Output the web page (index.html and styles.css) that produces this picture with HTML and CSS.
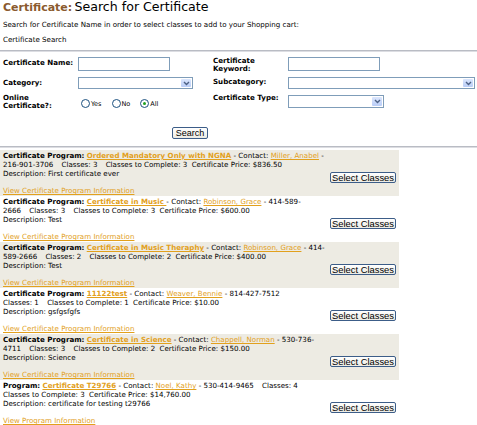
FILE: index.html
```html
<!DOCTYPE html>
<html lang="en">
<head>
  <meta charset="UTF-8">
  <title>Search for Certificate</title>
  <link rel="stylesheet" href="styles.css">
</head>
<body>
  <!-- Page heading -->
  <div class="heading">
    <span class="heading-key">Certificate:</span> <span class="heading-text">Search for Certificate</span>
  </div>
  <div class="intro">Search for Certificate Name in order to select classes to add to your Shopping cart:</div>
  <div class="section-title">Certificate Search</div>
  <div class="rule"></div>

  <!-- Search form -->
  <div class="search-form">
    <div class="frow frow-1">
      <div class="flabel">Certificate Name:</div>
      <div class="fctl"><span class="text-input name-input"></span></div>
      <div class="flabel">Certificate<br>Keyword:</div>
      <div class="fctl"><span class="text-input keyword-input"></span></div>
    </div>
    <div class="frow frow-2">
      <div class="flabel">Category:</div>
      <div class="fctl">
        <span class="select-box category-select"><span class="select-arrow"><svg width="7" height="5" viewBox="0 0 7 5"><path d="M1 1l2.5 2.5L6 1" stroke="#4d6185" stroke-width="1.4" fill="none"/></svg></span></span>
      </div>
      <div class="flabel">Subcategory:</div>
      <div class="fctl">
        <span class="select-box subcategory-select"><span class="select-arrow"><svg width="7" height="5" viewBox="0 0 7 5"><path d="M1 1l2.5 2.5L6 1" stroke="#4d6185" stroke-width="1.4" fill="none"/></svg></span></span>
      </div>
    </div>
    <div class="frow frow-3">
      <div class="flabel">Online<br>Certificate?:</div>
      <div class="fctl radios">
        <span class="radio"></span><span class="radio-text">Yes</span>
        <span class="radio"></span><span class="radio-text">No</span>
        <span class="radio checked"></span><span class="radio-text">All</span>
      </div>
      <div class="flabel">Certificate Type:</div>
      <div class="fctl">
        <span class="select-box type-select"><span class="select-arrow"><svg width="7" height="5" viewBox="0 0 7 5"><path d="M1 1l2.5 2.5L6 1" stroke="#4d6185" stroke-width="1.4" fill="none"/></svg></span></span>
      </div>
    </div>
    <div class="search-row">
      <button class="xp-button search-button">Search</button>
    </div>
  </div>
  <div class="rule rule-bottom"></div>

  <!-- Results -->
  <div class="results">
    <div class="prog alt">
      <div class="prog-lines">
        <b>Certificate Program:</b> <a class="prog-name" href="#">Ordered Mandatory Only with NGNA</a> - Contact: <a href="#">Miller, Anabel</a> -<br>
        216-901-3706<span class="gap"></span> Classes: 3<span class="gap"></span> Classes to Complete: 3<span class="gap-s"></span> Certificate Price: $836.50
      </div>
      <div class="prog-desc">
        <span>Description: First certificate ever</span>
        <button class="xp-button select-button">Select Classes</button>
      </div>
      <a class="prog-info" href="#">View Certificate Program Information</a>
    </div>

    <div class="prog">
      <div class="prog-lines">
        <b>Certificate Program:</b> <a class="prog-name" href="#">Certificate in Music </a> - Contact: <a href="#">Robinson, Grace</a> - 414-589-<br>
        2666<span class="gap"></span> Classes: 3<span class="gap"></span> Classes to Complete: 3<span class="gap-s"></span> Certificate Price: $600.00
      </div>
      <div class="prog-desc">
        <span>Description: Test</span>
        <button class="xp-button select-button">Select Classes</button>
      </div>
      <a class="prog-info" href="#">View Certificate Program Information</a>
    </div>

    <div class="prog alt">
      <div class="prog-lines">
        <b>Certificate Program:</b> <a class="prog-name" href="#">Certificate in Music Theraphy</a> - Contact: <a href="#">Robinson, Grace</a> - 414-<br>
        589-2666<span class="gap"></span> Classes: 2<span class="gap"></span> Classes to Complete: 2<span class="gap-s"></span> Certificate Price: $400.00
      </div>
      <div class="prog-desc">
        <span>Description: Test</span>
        <button class="xp-button select-button">Select Classes</button>
      </div>
      <a class="prog-info" href="#">View Certificate Program Information</a>
    </div>

    <div class="prog">
      <div class="prog-lines">
        <b>Certificate Program:</b> <a class="prog-name" href="#">11122test</a> - Contact: <a href="#">Weaver, Bennie</a> - 814-427-7512<br>
        Classes: 1<span class="gap"></span> Classes to Complete: 1<span class="gap-s"></span> Certificate Price: $10.00
      </div>
      <div class="prog-desc">
        <span>Description: gsfgsfgfs</span>
        <button class="xp-button select-button">Select Classes</button>
      </div>
      <a class="prog-info" href="#">View Certificate Program Information</a>
    </div>

    <div class="prog alt">
      <div class="prog-lines">
        <b>Certificate Program:</b> <a class="prog-name" href="#">Certificate in Science</a> - Contact: <a href="#">Chappell, Norman</a> - 530-736-<br>
        4711<span class="gap"></span> Classes: 3<span class="gap"></span> Classes to Complete: 2<span class="gap-s"></span> Certificate Price: $150.00
      </div>
      <div class="prog-desc">
        <span>Description: Science</span>
        <button class="xp-button select-button">Select Classes</button>
      </div>
      <a class="prog-info" href="#">View Certificate Program Information</a>
    </div>

    <div class="prog">
      <div class="prog-lines">
        <b>Program:</b> <a class="prog-name" href="#">Certificate T29766</a> - Contact: <a href="#">Noel, Kathy</a> - 530-414-9465<span class="gap"></span> Classes: 4<br>
        Classes to Complete: 3<span class="gap-s"></span> Certificate Price: $14,760.00
      </div>
      <div class="prog-desc">
        <span>Description: certificate for testing t29766</span>
        <button class="xp-button select-button">Select Classes</button>
      </div>
      <a class="prog-info" href="#">View Program Information</a>
    </div>
  </div>
</body>
</html>
```

FILE: styles.css
```css
/* base */
body {
  margin: 0;
  background: #fff;
  color: #000;
  font-family: "DejaVu Sans", Verdana, sans-serif;
  font-size: 7.1px;
}
a {
  color: #e2a01c;
  text-decoration: underline;
}

/* heading block */
.heading {
  padding-left: 3px;
  height: 14px;
  line-height: 14px;
  white-space: nowrap;
}
.heading-key {
  color: #8a5a2e;
  font-weight: bold;
  font-size: 11px;
}
.heading-text {
  font-size: 12.6px;
}
.intro {
  padding-left: 3px;
  margin-top: 6px;
  line-height: 10px;
}
.section-title {
  padding-left: 3px;
  margin-top: 5px;
  line-height: 10px;
}
.rule {
  margin-top: 5px;
  height: 1px;
  background: #b9bcc4;
  border-bottom: 1px solid #dcdde2;
}
.rule-bottom {
  margin-top: 7px;
}

/* search form */
.search-form {
  margin-top: 4px;
  padding-left: 3px;
}
.frow {
  display: grid;
  grid-template-columns: 75px 135px 75px 187px;
  align-items: start;
}
.frow-1 { height: 20px; }
.frow-2 { height: 17px; }
.frow-3 { height: 17px; }
.flabel {
  font-weight: bold;
  line-height: 8.5px;
}
.frow-1 .flabel:first-child { margin-top: 1.5px; line-height: 9px; }
.frow-1 .flabel:nth-child(3) { margin-top: 0.5px; }
.frow-2 .flabel:first-child { margin-top: 2.5px; }
.frow-2 .flabel:nth-child(3) { margin-top: 1.5px; }
.frow-3 .flabel { margin-top: 1px; line-height: 8px; }
.frow-3 .flabel:nth-child(3) { line-height: 8.5px; }

.text-input {
  display: block;
  margin-top: 1px;
  height: 12px;
  border: 1px solid #7f9db9;
  background: #fff;
}
.name-input { width: 90px; }
.keyword-input { width: 90px; }

.select-box {
  display: flex;
  justify-content: flex-end;
  margin-top: 1px;
  height: 10px;
  border: 1px solid #7f9db9;
  background: #fff;
}
.category-select { width: 113px; }
.subcategory-select { width: 185px; }
.type-select { width: 94px; height: 11px; margin-top: 2px; }
.select-arrow {
  width: 10px;
  margin: 1px;
  display: flex;
  align-items: center;
  justify-content: center;
  background: linear-gradient(#dbe6fd, #b9cdf7);
  border-radius: 1px;
}

/* radio group */
.radios {
  display: flex;
  align-items: center;
  margin-top: 6px;
  padding-left: 3px;
  height: 9px;
}
.radio {
  width: 7px;
  height: 7px;
  border: 1px solid #1c5180;
  border-radius: 50%;
  background: #fff;
  display: flex;
  align-items: center;
  justify-content: center;
  margin-right: 1px;
}
.radio.checked::after {
  content: "";
  width: 3px;
  height: 3px;
  border-radius: 50%;
  background: #21a121;
}
.radio-text {
  font-size: 6.5px;
  margin-right: 10px;
}

/* buttons */
.xp-button {
  font-family: "Liberation Sans", Arial, sans-serif;
  font-size: 9px;
  color: #000;
  padding: 0 2px;
  border: 1px solid #3c5d88;
  border-radius: 2px;
  background: linear-gradient(#ffffff, #ecebe4);
  line-height: 9px;
  height: 12px;
  cursor: pointer;
}
.search-row {
  width: 374px;
  margin-top: 17px;
  text-align: center;
}
.search-button {
  width: 36px;
}

/* result blocks */
.results {
  margin-top: 2px;
  width: 399px;
}
.prog {
  height: 46px;
  box-sizing: border-box;
  padding: 1px 3px 0 3px;
}
.prog.alt {
  background: #edebe3;
}
.prog-lines {
  line-height: 9px;
  white-space: nowrap;
}
.prog-name {
  font-weight: bold;
}
.gap {
  display: inline-block;
  width: 6px;
}
.gap-s {
  display: inline-block;
  width: 2px;
}
.prog-desc {
  display: flex;
  justify-content: space-between;
  align-items: flex-start;
  height: 14px;
  line-height: 10px;
}
.select-button {
  margin-top: 3px;
  width: 66px;
  height: 11px;
  padding: 0;
  font-size: 9.4px;
}
.prog-info {
  display: block;
  margin-top: 3px;
  line-height: 9px;
}
```
